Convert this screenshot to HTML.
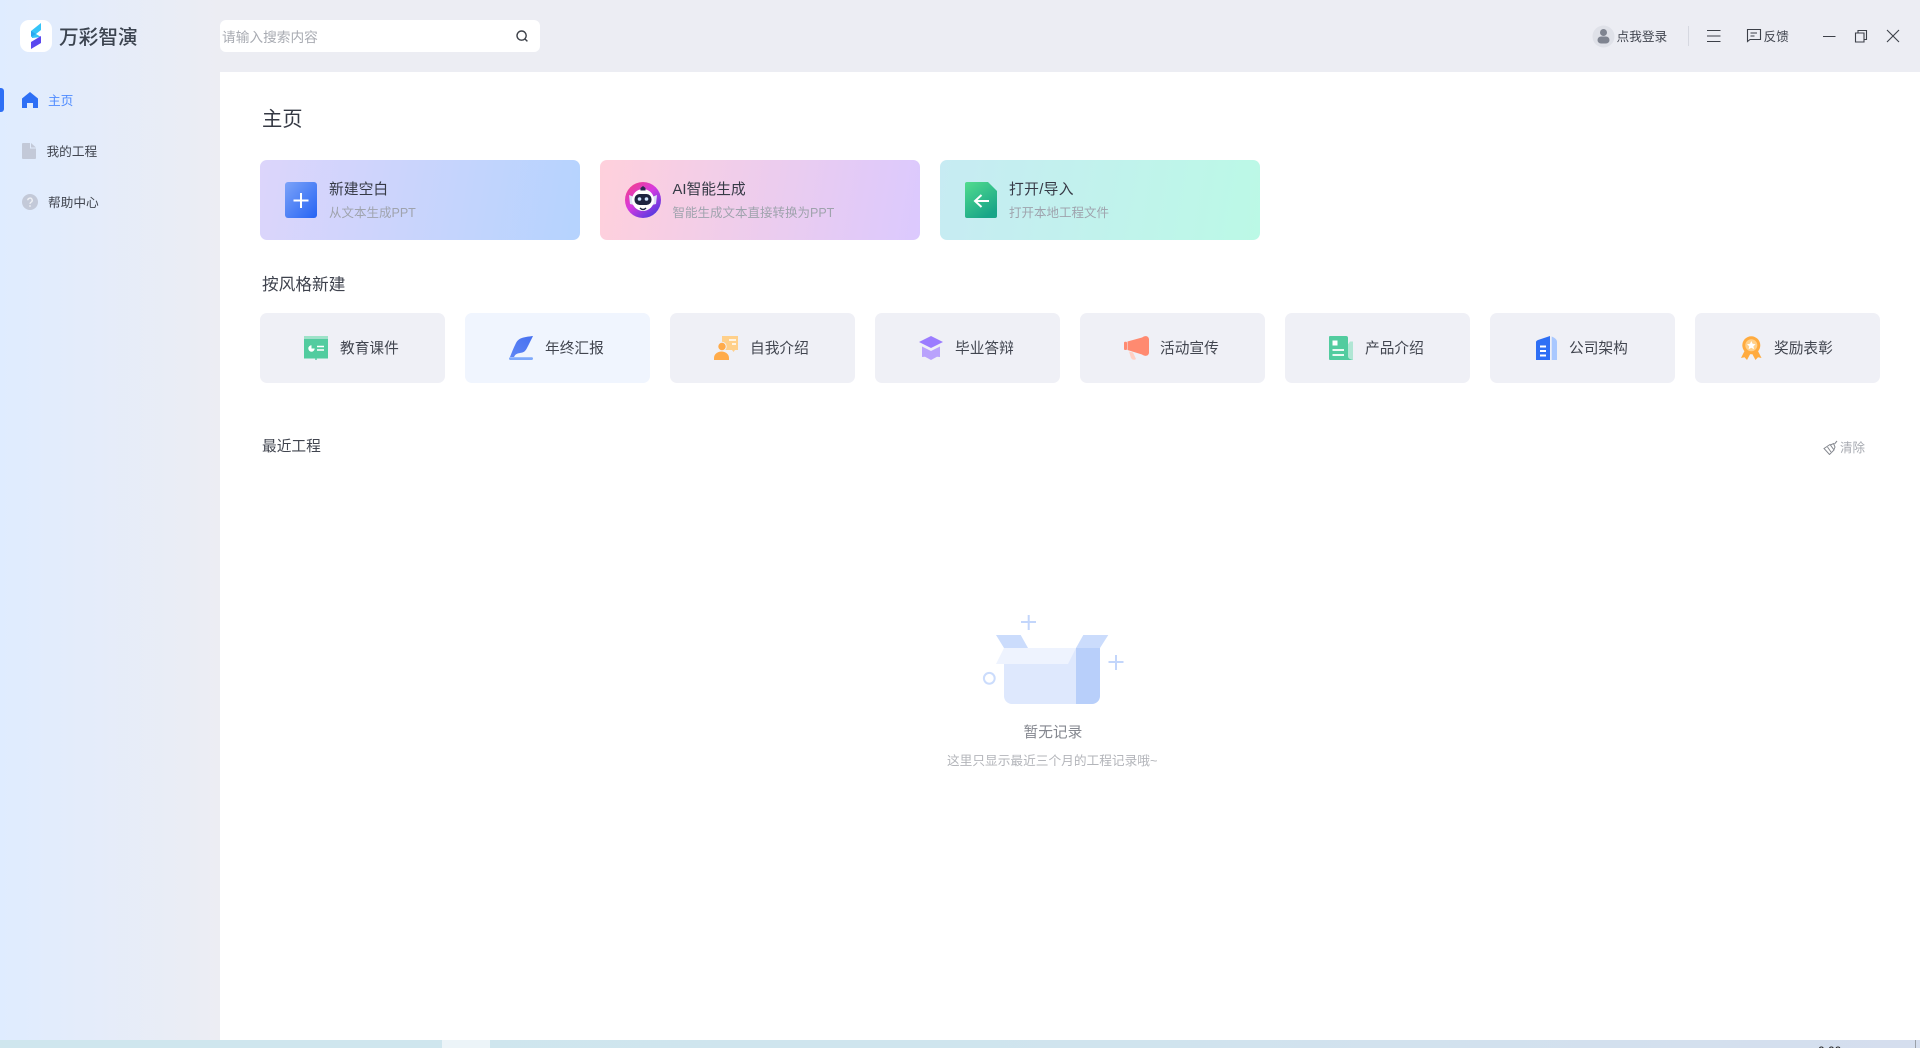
<!DOCTYPE html>
<html lang="zh-CN"><head><meta charset="utf-8"><title>万彩智演</title>
<style>
*{margin:0;padding:0;box-sizing:border-box}
html,body{width:1920px;height:1048px;overflow:hidden;background:#fff;font-family:"Liberation Sans","Noto Sans CJK SC",sans-serif;color:#3a3e4a}
.a{position:absolute;white-space:nowrap}
svg{position:absolute;display:block}
.t{transform:translateY(-50%);line-height:20px}
.card{position:absolute;top:160px;width:320px;height:80px;border-radius:7px}
.ct{position:absolute;left:69px;top:20px;font-size:14.8px;line-height:20px;color:#363a46}
.cs{position:absolute;left:69px;top:44px;font-size:12.5px;line-height:18px;color:#9fa3ad}
.btn{position:absolute;top:313px;width:185px;height:70px;border-radius:7px;background:#eff0f6}
.btn span{position:absolute;left:80px;top:26px;font-size:14.7px;line-height:20px;color:#41454f}
.btn svg{left:44px;top:23px}
</style></head><body>
<div class="a" style="left:0;top:0;width:220px;height:1040px;background:linear-gradient(90deg,#dfecff,#ecedf3)"></div>
<div class="a" style="left:220px;top:0;width:1700px;height:72px;background:#ecedf3"></div>
<div class="a" style="left:20px;top:20px;width:32px;height:32px;border-radius:9px;background:#fff"></div>
<svg style="left:28px;top:22px" width="16" height="28" viewBox="0 0 16 28">
<path d="M3 9 13 1v7L8 12l5 3-9 1z" fill="#36c4f8"/><path d="M3 9l5 3-5 3z" fill="#2aa6ee"/>
<path d="M3 20l10-6v7L3 27z" fill="#5a48ef"/></svg>
<div class="a t" style="left:59px;top:38px;font-size:19.700px;font-weight:500;color:#3c4450">万彩智演</div>
<div class="a" style="left:220px;top:20px;width:320px;height:32px;border-radius:6px;background:#fff"></div>
<div class="a t" style="left:222px;top:38px;font-size:13.700px;color:#a8abb2">请输入搜索内容</div>
<svg style="left:514px;top:28px" width="16" height="16" viewBox="0 0 16 16" fill="none" stroke="#3c4048" stroke-width="1.400"><circle cx="7.600" cy="7.600" r="4.600"/><path d="M11 11l2.400 2.400"/></svg>
<div class="a" style="left:0;top:88px;width:3.500px;height:24px;border-radius:0 3px 3px 0;background:#2e6ff5"></div>
<svg style="left:22px;top:92px" width="16" height="16" viewBox="0 0 16 16"><path d="M8 0 16 6.500V16H11V11H5V16H0V6.500Z" fill="#2e6ff5"/></svg>
<div class="a t" style="left:48px;top:101px;font-size:12.700px;color:#4f8bff">主页</div>
<svg style="left:22px;top:143px" width="14" height="16" viewBox="0 0 14 16"><path d="M1 0H8V5.500H14V15a1 1 0 0 1-1 1H1a1 1 0 0 1-1-1V1a1 1 0 0 1 1-1zM9 0l5 4.500H9z" fill="#c3c9d8"/></svg>
<div class="a t" style="left:46.500px;top:152px;font-size:12.700px;color:#41454f">我的工程</div>
<svg style="left:22px;top:194px" width="16" height="16" viewBox="0 0 16 16"><circle cx="8" cy="8" r="8" fill="#c3c9d8"/><path d="M5.800 6.300a2.200 2.200 0 1 1 3.300 1.900c-.8.5-1.100.8-1.100 1.700" fill="none" stroke="#eef0f5" stroke-width="1.400"/><circle cx="8" cy="12" r=".9" fill="#eef0f5"/></svg>
<div class="a t" style="left:48px;top:203px;font-size:12.700px;color:#41454f">帮助中心</div>
<svg style="left:1592px;top:25px" width="23" height="23" viewBox="0 0 23 23"><circle cx="11.500" cy="11.500" r="11" fill="#dfe1e8"/><circle cx="11.500" cy="7.500" r="3.500" fill="#7f8490"/><rect x="5.500" y="11.500" width="12" height="7" rx="3.500" fill="#7f8490"/></svg>
<div class="a t" style="left:1616.500px;top:37px;font-size:12.700px;color:#41454f">点我登录</div>
<div class="a" style="left:1688px;top:26px;width:1px;height:20px;background:#d6d8e0"></div>
<svg style="left:1706px;top:28px" width="16" height="16" viewBox="0 0 16 16" stroke="#3c4048" stroke-width="1"><path d="M1 2.500H14.500M1 8H14.500M1 13.500H14.500"/></svg>
<svg style="left:1746px;top:28px" width="16" height="15" viewBox="0 0 16 15" fill="none" stroke="#3c4048" stroke-width="1.100"><path d="M1.500 1.500H14.500V11.500H4L1.500 13.500zM4.500 5H11M4.500 8H8.500"/></svg>
<div class="a t" style="left:1763.500px;top:37px;font-size:12.700px;color:#41454f">反馈</div>
<svg style="left:1822px;top:28.500px" width="14" height="14" viewBox="0 0 14 14" stroke="#3c4048" stroke-width="1"><path d="M1 7.500H13.500"/></svg>
<svg style="left:1854px;top:29px" width="14" height="14" viewBox="0 0 14 14" fill="none" stroke="#3c4048" stroke-width="1.100"><path d="M1.500 4H10V13H1.500zM4 4V1.500H12.500V10.500H10"/></svg>
<svg style="left:1886px;top:29px" width="14" height="14" viewBox="0 0 14 14" stroke="#3c4048" stroke-width="1.100"><path d="M1 1 13 13M13 1 1 13"/></svg>
<div class="a t" style="left:262px;top:120px;font-size:20.300px;color:#343843">主页</div>
<div class="card" style="left:260px;background:linear-gradient(100deg,#dcd5fb,#b5d3fe)">
<svg style="left:25px;top:22px" width="32" height="36" viewBox="0 0 32 36"><defs><linearGradient id="g1" x1="0" y1="0" x2="1" y2="1"><stop offset="0" stop-color="#7ca3f8"/><stop offset="1" stop-color="#2563f4"/></linearGradient></defs><rect width="32" height="36" rx="3" fill="url(#g1)"/><path d="M16 11V26M8.500 18.500H23.500" stroke="#fff" stroke-width="2"/></svg>
<div class="ct">新建空白</div><div class="cs">从文本生成PPT</div></div>
<div class="card" style="left:600px;background:linear-gradient(100deg,#ffd0dc,#dbc9fe)">
<svg style="left:25px;top:22px" width="36" height="36" viewBox="0 0 36 36"><defs><linearGradient id="g2" x1="0" y1="0" x2=".8" y2="1"><stop offset="0" stop-color="#f8407a"/><stop offset=".5" stop-color="#d63ae0"/><stop offset="1" stop-color="#4a3ae0"/></linearGradient></defs><circle cx="18" cy="18" r="18" fill="url(#g2)"/><path d="M4 13l5 2v8l-4-1zM32 13l-5 2v8l4-1z" fill="#dfe4f5"/><circle cx="18" cy="18" r="11" fill="#fff"/><path d="M15.500 6l2.500-2 2.500 2v2.500h-5z" fill="#2a2a50"/><rect x="9.500" y="12" width="17" height="11" rx="5" fill="#1e2440"/><circle cx="14.500" cy="17" r="1.800" fill="#cfe4ff"/><circle cx="21.500" cy="17" r="1.800" fill="#cfe4ff"/><path d="M15 26q3 3 6 0" fill="none" stroke="#1e2440" stroke-width="1.400"/></svg>
<div class="ct" style="left:72.500px">AI智能生成</div><div class="cs" style="left:72.500px">智能生成文本直接转换为PPT</div></div>
<div class="card" style="left:940px;background:linear-gradient(100deg,#c7ebf3,#bbf9e6)">
<svg style="left:25px;top:22px" width="32" height="36" viewBox="0 0 32 36"><defs><linearGradient id="g3" x1="0" y1="0" x2=".6" y2="1"><stop offset="0" stop-color="#52dc8e"/><stop offset="1" stop-color="#18a588"/></linearGradient></defs><path d="M2 0H23L32 9V34a2 2 0 0 1-2 2H2a2 2 0 0 1-2-2V2a2 2 0 0 1 2-2z" fill="url(#g3)"/><path d="M24 19H11M16.500 13 10 19l6.500 6" fill="none" stroke="#fff" stroke-width="2"/></svg>
<div class="ct" style="letter-spacing:.3px">打开/导入</div><div class="cs">打开本地工程文件</div></div>
<div class="a t" style="left:262px;top:285px;font-size:16.700px;color:#3e424d">按风格新建</div>
<div class="btn" style="left:260px"><svg width="24" height="24" viewBox="0 0 24 24"><rect width="24" height="2" fill="#9de3c8"/><rect y="2.500" width="24" height="20" fill="#52cc9f"/><rect x="11.300" y="22" width="1.400" height="2" fill="#52cc9f"/><path d="M7.500 9.300a3.200 3.200 0 1 0 3.200 3.200H7.500z" fill="#fff"/><path d="M13 10.500H20M13 14H20" stroke="#fff" stroke-width="1.500"/></svg><span>教育课件</span></div>
<div class="btn" style="left:465px;background:#f0f5fe"><svg width="24" height="24" viewBox="0 0 24 24"><defs><linearGradient id="g4" x1="1" y1="0" x2="0" y2="1"><stop offset="0" stop-color="#4670f0"/><stop offset="1" stop-color="#5f86f5"/></linearGradient></defs><path d="M24 0C17 1 10 1 7 7 4.500 12 2.500 17 1 21H5C6.500 18 8 17.500 11 17 14 16.500 16 16 18 12 20.500 7 22.500 3 24 0z" fill="url(#g4)"/><rect y="21.300" width="24" height="2.700" rx="1.200" fill="#7fa9fb"/></svg><span>年终汇报</span></div>
<div class="btn" style="left:670px"><svg width="24" height="24" viewBox="0 0 24 24"><path d="M8 0H24V14H21L19.500 16 18 14H8z" fill="#ffd08a"/><path d="M15 4H22M18 8H22" stroke="#fff" stroke-width="1.500"/><circle cx="8" cy="10.500" r="4.200" fill="#ffab4a" stroke="#eff0f6"/><path d="M0 24V22a7.500 6.500 0 0 1 15 0v2z" fill="#ffab4a"/></svg><span>自我介绍</span></div>
<div class="btn" style="left:875px"><svg width="24" height="24" viewBox="0 0 24 24"><path d="M12 0 24 6 12 12 0 6z" fill="#9b7cff"/><path d="M3 10.500 12 15l9-4.500V21l-3-.3L12 24l-6-3.300-3 .3z" fill="#b9a2fc"/></svg><span>毕业答辩</span></div>
<div class="btn" style="left:1080px"><svg width="26" height="24" viewBox="0 0 26 24"><rect y="5.700" width="3" height="8.300" rx="1" fill="#ff8a70"/><path d="M3.500 5.500 18 1.500C20 0 24-1 25 3V17C24 21 20 20 18 18.500L3.500 14z" fill="#ff8a70"/><path d="M5 15.500 9 16.500 12 23C10 24.500 8 23.500 7 22z" fill="#ffd0c4"/></svg><span>活动宣传</span></div>
<div class="btn" style="left:1285px"><svg width="24" height="24" viewBox="0 0 24 24"><path d="M21 5.500h3V24H8z" fill="#b0e6d4"/><path d="M1 0H17a2 2 0 0 1 2 2V20c0 2 1 3 5 4H1a1 1 0 0 1-1-1V1a1 1 0 0 1 1-1z" fill="#52cc9f"/><rect x="3.500" y="4.500" width="5" height="5" fill="#fff"/><path d="M3.500 14H15M3.500 19H15" stroke="#fff" stroke-width="1.800"/></svg><span>产品介绍</span></div>
<div class="btn" style="left:1490px"><svg width="24" height="24" viewBox="0 0 24 24"><path d="M2 6C2 5 3 4.500 4 4L16 0V24H2z" fill="#2e6ff5"/><path d="M17.700 0.500C20 1.500 23 3 23 6V24H17.700z" fill="#a9c8ff"/><path d="M6 10.500H12M6 15H12M6 19.500H12" stroke="#fff" stroke-width="2"/></svg><span style="left:79px">公司架构</span></div>
<div class="btn" style="left:1695px"><svg width="24" height="24" viewBox="0 0 24 24"><path d="M6 14 2 22l3.500-.8L8 24l4-7.500zM18.500 14l4 8-3.500-.8L16.500 24l-4-7.500z" fill="#ffab3f"/><circle cx="12.300" cy="9.300" r="9" fill="#ffab3f"/><circle cx="12.300" cy="9.300" r="6" fill="#ffd08a"/><path d="M12.300 5l1.300 2.800 3 .4-2.200 2 .6 3-2.700-1.500-2.700 1.500.6-3-2.200-2 3-.4z" fill="#fff"/></svg><span style="left:79px">奖励表彰</span></div>
<div class="a t" style="left:262px;top:447px;font-size:14.700px;color:#41454f">最近工程</div>
<svg style="left:1823px;top:440px" width="15" height="15" viewBox="0 0 15 15" fill="none" stroke="#85888f" stroke-width="1"><path d="M1 8.500 7 4.500 11 10 6.500 14.500zM7.500 5l3-1.500L12 7l-1 2.500M11.500 4 14 1M4.500 7 8 12"/></svg>
<div class="a t" style="left:1840px;top:448px;font-size:12.500px;color:#a7aab1">清除</div>
<svg style="left:980px;top:612px" width="145" height="96" viewBox="980 612 145 96">
<path d="M996 635H1020.700L1028 648H1004zM1083.300 635H1108.300L1100 648H1076z" fill="#cbdcfc"/>
<path d="M1004 648H1076V704H1012a8 8 0 0 1-8-8z" fill="#dee8fd"/>
<path d="M1076 648H1100V696a8 8 0 0 1-8 8H1076z" fill="#b8cffa"/>
<path d="M1004 648H1076L1068 664H996z" fill="#eef3fe"/>
<path d="M1028.700 615V630M1021 622H1036M1116 655V670M1108.500 662H1123.500" stroke="#c3d6fb" stroke-width="2"/>
<circle cx="989.300" cy="678.300" r="5.400" fill="none" stroke="#cbdcfc" stroke-width="2"/></svg>
<div class="a t" style="left:1023.500px;top:733px;font-size:14.700px;color:#84878f">暂无记录</div>
<div class="a t" style="left:947px;top:761px;font-size:12.700px;color:#b3b5ba">这里只显示最近三个月的工程记录哦~</div>
<div class="a" style="left:0;top:1040px;width:1920px;height:8px;overflow:hidden;background:linear-gradient(90deg,#cfe6ee,#cfe5ee 50%,#d5deee)">
<div class="a" style="left:442px;top:0;width:48px;height:8px;background:#ecf4f8"></div>
<div class="a" style="left:1818px;top:4px;font-size:12px;line-height:14px;color:#1a1a1a">0:00</div>
<div class="a" style="left:1915px;top:0;width:1px;height:8px;background:#9aa0a8"></div>
</div>
</body></html>
